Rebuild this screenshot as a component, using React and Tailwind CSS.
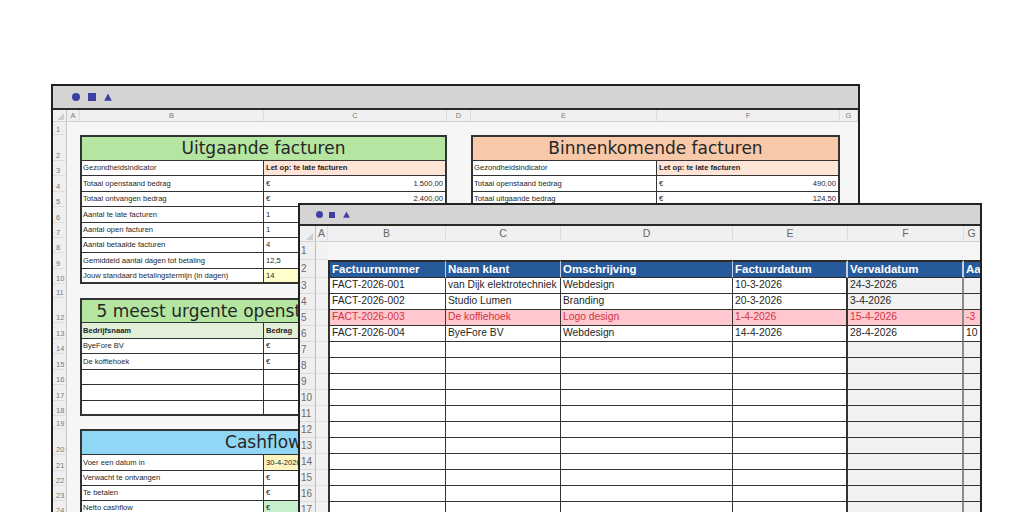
import React from 'react';

// window 1 column widths
const W1 = { b: 'w-[184px]', c: 'w-[183px]', e: 'w-[186px]', f: 'w-[183px]' };

// window 2 column classes (B..G)
const COLS2 = [
  'w-[118px] border-l-2 border-r',
  'w-[115px] border-r',
  'w-[172px] border-r',
  'w-[115px] border-r-2',
  'w-[116px] border-r-2 border-r-[#8c8c8c]',
  'w-[16px]',
];

const INVOICES = [
  ['FACT-2026-001', 'van Dijk elektrotechniek', 'Webdesign', '10-3-2026', '24-3-2026', ''],
  ['FACT-2026-002', 'Studio Lumen', 'Branding', '20-3-2026', '3-4-2026', ''],
  ['FACT-2026-003', 'De koffiehoek', 'Logo design', '1-4-2026', '15-4-2026', '-3'],
  ['FACT-2026-004', 'ByeFore BV', 'Webdesign', '14-4-2026', '28-4-2026', '10'],
];

function Triangle({ size }) {
  return (
    <svg width={size} height={size} viewBox="0 0 10 10" className="block">
      <polygon points="5,0.6 9.8,9.6 0.2,9.6" fill="#3f3fa3" />
    </svg>
  );
}

function Corner() {
  return (
    <svg width="7" height="7" viewBox="0 0 10 10" className="absolute right-[2px] bottom-[1px]">
      <polygon points="10,0 10,10 0,10" fill="#cfcfcf" />
    </svg>
  );
}

function Euro({ amount }) {
  return (
    <>
      <span>€</span>
      <span className="ml-auto">{amount}</span>
    </>
  );
}

function W1Row({ h, n, children }) {
  return (
    <div className={`flex shrink-0 ${h}`}>
      <div className="w-[14px] shrink-0 flex items-end pl-[3px] pb-px bg-[#efefef] border-r border-b border-r-[#c6c6c6] border-b-[#dddddd] text-[7.5px] leading-none text-[#7b7b7b]">
        {n}
      </div>
      <div className="w-[13px] shrink-0" />
      {children}
    </div>
  );
}

function Gap({ w }) {
  return <div className={`${w} shrink-0`} />;
}

function Title({ w, bg, children }) {
  return (
    <div
      className={`${w} ${bg} shrink-0 border-t-2 border-x-2 border-b border-[#333] flex items-center justify-center overflow-hidden whitespace-nowrap font-['DejaVu_Sans',sans-serif] text-[17px] leading-none text-[#262626]`}
    >
      {children}
    </div>
  );
}

function KV({ wl, wr, label, value, labelBg = 'bg-white', valueBg = 'bg-white', bold, last }) {
  const b = last ? 'border-b-2' : 'border-b';
  return (
    <>
      <div
        className={`${wl} ${labelBg} ${b} ${bold ? 'font-bold' : ''} shrink-0 border-l-2 border-r border-[#333] flex items-center pl-px overflow-hidden whitespace-nowrap text-[7.6px] leading-none text-[#1f1f1f]`}
      >
        {label}
      </div>
      <div
        className={`${wr} ${valueBg} ${b} ${bold ? 'font-bold' : ''} shrink-0 border-r-2 border-[#333] flex items-center px-[2px] overflow-hidden whitespace-nowrap text-[7.6px] leading-none text-[#1f1f1f]`}
      >
        {value}
      </div>
    </>
  );
}

function LetOp() {
  return <span className="font-bold">Let op: te late facturen</span>;
}

function Window1() {
  const left = [
    ['Gezondheidsindicator', <LetOp />, 'bg-[#fde4d7]'],
    ['Totaal openstaand bedrag', <Euro amount="1.500,00" />],
    ['Totaal ontvangen bedrag', <Euro amount="2.400,00" />],
    ['Aantal te late facturen', '1'],
    ['Aantal open facturen', '1'],
    ['Aantal betaalde facturen', '4'],
    ['Gemiddeld aantal dagen tot betaling', '12,5'],
    ['Jouw standaard betalingstermijn (in dagen)', '14', 'bg-[#ffffcc]'],
  ];
  const right = [
    ['Gezondheidsindicator', <LetOp />, 'bg-[#fde4d7]'],
    ['Totaal openstaand bedrag', <Euro amount="490,00" />],
    ['Totaal uitgaande bedrag', <Euro amount="124,50" />],
    ['Aantal te late facturen', '0'],
    ['Aantal open facturen', '1'],
    ['Aantal betaalde facturen', '3'],
    ['Gemiddeld aantal dagen tot betaling', '9'],
    ['Standaard betalingstermijn leverancier', '30', 'bg-[#ffffcc]'],
  ];
  const h3 = ['h-[15px]', 'h-[16px]', 'h-[15px]', 'h-[16px]', 'h-[15px]', 'h-[15px]', 'h-[16px]', 'h-[15px]'];
  const urgent = [
    ['ByeFore BV', '€'],
    ['De koffiehoek', '€'],
    ['', ''],
    ['', ''],
    ['', ''],
  ];
  const h14 = ['h-[15px]', 'h-[16px]', 'h-[15px]', 'h-[16px]', 'h-[15px]'];
  const cash = [
    ['Voer een datum in', '30-4-2026', 'bg-[#fff4c1]', 'h-[16px]'],
    ['Verwacht te ontvangen', '€', 'bg-white', 'h-[15px]'],
    ['Te betalen', '€', 'bg-white', 'h-[15px]'],
    ['Netto cashflow', '€', 'bg-[#c6efce]', 'h-[15px]'],
  ];

  return (
    <div className="absolute left-[51px] top-[84px] w-[809px] h-[440px] border-2 border-[#222] bg-[#f6f6f6] flex flex-col overflow-hidden">
      <div className="h-[24px] shrink-0 bg-[#d4d4d4] border-b-2 border-[#2a2a2a] flex items-center pl-[19px]">
        <span className="w-[8px] h-[8px] rounded-full bg-[#3f3fa3]" />
        <span className="w-[8px] h-[8px] ml-[8px] bg-[#3f3fa3]" />
        <span className="ml-[8px]">
          <Triangle size={8} />
        </span>
      </div>

      <div className="h-[12px] shrink-0 flex bg-[#f0f0f0] border-b border-[#d2d2d2] text-[7.5px] leading-none text-[#7a7a7a]">
        <div className="relative w-[14px] shrink-0 border-r border-[#c6c6c6]">
          <Corner />
        </div>
        {[
          ['w-[13px]', 'A'],
          ['w-[184px]', 'B'],
          ['w-[183px]', 'C'],
          ['w-[24px]', 'D'],
          ['w-[186px]', 'E'],
          ['w-[183px]', 'F'],
          ['w-[18px]', 'G'],
        ].map(([w, l]) => (
          <div key={l} className={`${w} shrink-0 flex items-center justify-center border-r border-[#dcdcdc]`}>
            {l}
          </div>
        ))}
      </div>

      <W1Row h="h-[13px]" n="1" />
      <W1Row h="h-[26px]" n="2">
        <Title w="w-[367px]" bg="bg-[#b4e6a2]">Uitgaande facturen</Title>
        <Gap w="w-[24px]" />
        <Title w="w-[369px]" bg="bg-[#f8c9a9]">Binnenkomende facturen</Title>
      </W1Row>
      {left.map((row, i) => (
        <W1Row key={i} h={h3[i]} n={String(i + 3)}>
          <KV wl={W1.b} wr={W1.c} label={row[0]} value={row[1]} valueBg={row[2]} last={i === 7} />
          <Gap w="w-[24px]" />
          <KV wl={W1.e} wr={W1.f} label={right[i][0]} value={right[i][1]} valueBg={right[i][2]} last={i === 7} />
        </W1Row>
      ))}
      <W1Row h="h-[14px]" n="11" />
      <W1Row h="h-[25px]" n="12">
        <Title w="w-[367px]" bg="bg-[#b4e6a2]">5 meest urgente openstaande facturen</Title>
      </W1Row>
      <W1Row h="h-[16px]" n="13">
        <KV wl={W1.b} wr={W1.c} label="Bedrijfsnaam" value="Bedrag" labelBg="bg-[#e2f0da]" valueBg="bg-[#e2f0da]" bold />
      </W1Row>
      {urgent.map((row, i) => (
        <W1Row key={i} h={h14[i]} n={String(i + 14)}>
          <KV wl={W1.b} wr={W1.c} label={row[0]} value={row[1]} last={i === 4} />
        </W1Row>
      ))}
      <W1Row h="h-[13px]" n="19" />
      <W1Row h="h-[26px]" n="20">
        <Title w="w-[367px]" bg="bg-[#90d7f6]">Cashflow</Title>
      </W1Row>
      {cash.map((row, i) => (
        <W1Row key={i} h={row[3]} n={String(i + 21)}>
          <KV wl={W1.b} wr={W1.c} label={row[0]} value={row[1]} valueBg={row[2]} last={i === 3} />
        </W1Row>
      ))}
      <W1Row h="h-[15px]" n="25" />
    </div>
  );
}

function W2Row({ h, n, children }) {
  return (
    <div className={`flex shrink-0 ${h}`}>
      <div className="w-[16px] shrink-0 flex items-center pl-px bg-[#efefef] border-r border-b border-r-[#bdbdbd] border-b-[#dadada] text-[10px] leading-none text-[#6a6a6a]">
        {n}
      </div>
      <div className="w-[12px] shrink-0 bg-[#f2f2f2] border-b border-[#e0e0e0]" />
      {children}
    </div>
  );
}

function Window2() {
  const heads = ['Factuurnummer', 'Naam klant', 'Omschrijving', 'Factuurdatum', 'Vervaldatum', 'Aantal dagen'];
  const empty = Array.from({ length: 11 }, (_, i) => i + 7);

  const cellBg = (rowIdx, col) => {
    if (rowIdx === 2) return 'bg-[#ffc7ce] text-[#cf3443]';
    if (col >= 4 && rowIdx !== 3) return 'bg-[#f1f1f1] text-[#1f1f1f]';
    return 'bg-white text-[#1f1f1f]';
  };

  return (
    <div className="absolute left-[298px] top-[203px] w-[684px] h-[330px] border-2 border-[#222] bg-[#f5f5f5] flex flex-col overflow-hidden">
      <div className="h-[21px] shrink-0 bg-[#d4d4d4] border-b-2 border-[#2a2a2a] flex items-center pl-[16px]">
        <span className="w-[7px] h-[7px] rounded-full bg-[#3f3fa3]" />
        <span className="w-[6px] h-[6px] ml-[6px] bg-[#3f3fa3]" />
        <span className="ml-[8px]">
          <Triangle size={7} />
        </span>
      </div>

      <div className="h-[16px] shrink-0 flex bg-[#f0f0f0] border-b border-[#d2d2d2] text-[10.5px] leading-none text-[#666]">
        <div className="relative w-[16px] shrink-0 border-r border-[#bdbdbd]">
          <Corner />
        </div>
        {[
          ['w-[12px]', 'A'],
          ['w-[118px]', 'B'],
          ['w-[115px]', 'C'],
          ['w-[172px]', 'D'],
          ['w-[115px]', 'E'],
          ['w-[116px]', 'F'],
          ['w-[16px]', 'G'],
        ].map(([w, l]) => (
          <div key={l} className={`${w} shrink-0 flex items-center justify-center border-r border-[#dcdcdc]`}>
            {l}
          </div>
        ))}
      </div>

      <W2Row h="h-[18px]" n="1" />

      <W2Row h="h-[18px]" n="2">
        {heads.map((t, i) => (
          <div
            key={t}
            className={`${COLS2[i]} shrink-0 border-t-2 border-b border-[#2b2b2b] border-r-[#c3d0e2] bg-[#265a9a] flex items-center px-[2px] overflow-hidden whitespace-nowrap text-[11.5px] font-bold leading-none text-white`}
          >
            {t}
          </div>
        ))}
      </W2Row>

      {INVOICES.map((row, r) => (
        <W2Row key={r} h="h-[16px]" n={String(r + 3)}>
          {row.map((v, c) => (
            <div
              key={c}
              className={`${COLS2[c]} ${cellBg(r, c)} shrink-0 border-b border-[#333] flex items-center px-[2px] overflow-hidden whitespace-nowrap text-[10.3px] leading-none`}
            >
              {v}
            </div>
          ))}
        </W2Row>
      ))}

      {empty.map((n) => (
        <W2Row key={n} h="h-[16px]" n={String(n)}>
          {COLS2.map((w, c) => (
            <div
              key={c}
              className={`${w} ${c >= 4 ? 'bg-[#f1f1f1]' : 'bg-white'} shrink-0 border-b border-[#333]`}
            />
          ))}
        </W2Row>
      ))}
    </div>
  );
}

export default function App() {
  return (
    <div className="relative w-[1024px] h-[512px] overflow-hidden bg-white font-['Liberation_Sans',Arial,sans-serif]">
      <Window1 />
      <Window2 />
    </div>
  );
}
